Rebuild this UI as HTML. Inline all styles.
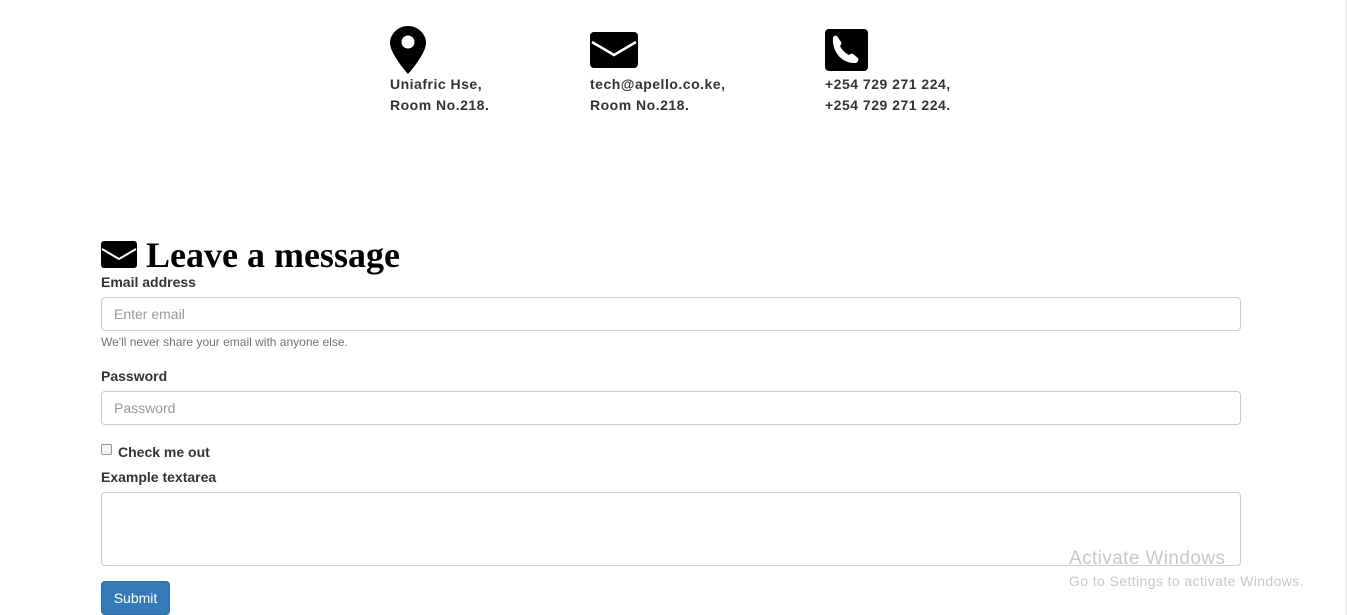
<!DOCTYPE html>
<html><head><meta charset="utf-8"><style>
body{margin:0;width:1347px;height:615px;background:#fff;position:relative;overflow:hidden;font-family:"Liberation Sans",Arial,sans-serif;color:#333}
.a{position:absolute}
.info{font-size:14px;font-weight:bold;line-height:21px;color:#333;letter-spacing:0.5px}
label{position:absolute;font-size:14px;font-weight:bold;color:#333}
.inp{position:absolute;left:101px;width:1140px;border:1px solid #ccc;border-radius:4px;box-sizing:border-box;background:#fff;font-size:14px;color:#999;padding-left:12px}
</style></head><body>
<div class="a" style="right:0;top:0;width:2px;height:615px;background:#eee"></div>
<svg class="a" style="left:390px;top:26px" width="36" height="48" viewBox="0 0 36 48"><path d="M18 0C8 0 0 8 0 17c0 11 18 31 18 31s18-20 18-31C36 8 28 0 18 0z" fill="#000"/><circle cx="18" cy="16" r="6.5" fill="#fff"/></svg>
<svg class="a" style="left:590px;top:32px" width="48" height="36" viewBox="0 0 48 36"><rect width="48" height="36" rx="4" fill="#000"/><path d="M2 10l22 13 22-13" stroke="#fff" stroke-width="2.5" fill="none"/></svg>
<svg class="a" style="left:825px;top:29px" width="43" height="42" viewBox="0 0 43 42"><rect width="43" height="42" rx="4" fill="#000"/><path d="M8 9c0-2 3-3 4-2l4 6c1 1 0 3-1 4 2 4 5 7 9 9 1-1 3-2 4-1l5 4c1 1 0 4-2 5-14 1-24-11-23-25z" fill="#fff"/></svg>
<div class="a info" style="left:390px;top:74px">Uniafric Hse,<br>Room No.218.</div>
<div class="a info" style="left:590px;top:74px">tech@apello.co.ke,<br>Room No.218.</div>
<div class="a info" style="left:825px;top:74px">+254 729 271 224,<br>+254 729 271 224.</div>
<svg class="a" style="left:101px;top:241px" width="36" height="27" viewBox="0 0 36 27"><rect width="36" height="27" rx="3" fill="#000"/><path d="M1 8l17 10 17-10" stroke="#fff" stroke-width="2" fill="none"/></svg>
<div class="a" style="left:146px;top:234px;font-family:'Liberation Serif',serif;font-weight:bold;font-size:36px;color:#000">Leave a message</div>
<label style="left:101px;top:274px">Email address</label>
<div class="inp" style="top:297px;height:34px;line-height:32px">Enter email</div>
<div class="a" style="left:101px;top:335px;font-size:12px;color:#737373">We'll never share your email with anyone else.</div>
<label style="left:101px;top:368px">Password</label>
<div class="inp" style="top:391px;height:34px;line-height:32px">Password</div>
<div class="a" style="left:101px;top:444px;width:11px;height:11px;border:1px solid #999;border-radius:2px;background:#f4f4f4;box-sizing:border-box"></div>
<label style="left:118px;top:444px">Check me out</label>
<label style="left:101px;top:469px">Example textarea</label>
<div class="inp" style="top:492px;height:74px"></div>
<div class="a" style="left:101px;top:581px;width:69px;height:34px;background:#337ab7;border:1px solid #2e6da4;border-radius:4px;box-sizing:border-box;color:#fff;font-size:14px;line-height:32px;text-align:center">Submit</div>
<div class="a" style="left:1069px;top:548px;font-size:19px;color:#c8c8c8;letter-spacing:0.4px">Activate Windows</div>
<div class="a" style="left:1069px;top:573px;font-size:14px;color:#c8c8c8;letter-spacing:0.4px">Go to Settings to activate Windows.</div>
</body></html>
